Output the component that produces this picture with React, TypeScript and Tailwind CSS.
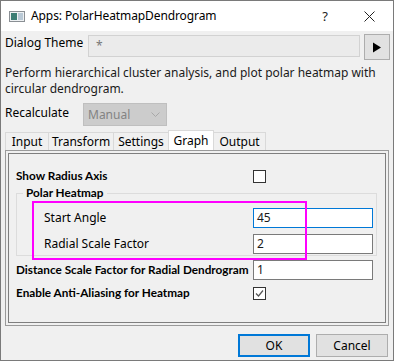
import React from 'react';

function AppIcon() {
  return (
    <svg width="16" height="11" viewBox="0 0 16 11">
      <rect x="0.5" y="0.5" width="15" height="10" fill="#eef1f3" stroke="#8a8f94" />
      <rect x="2" y="2" width="6" height="7" fill="#3c7d74" />
      <rect x="9" y="2" width="5" height="7" fill="#b9c9d6" />
    </svg>
  );
}

function CheckBox({ checked }: { checked?: boolean }) {
  return (
    <div className="w-[13px] h-[13px] border border-[#333333] bg-white flex items-center justify-center shrink-0">
      {checked && (
        <svg width="11" height="11" viewBox="0 0 11 11">
          <polyline points="2,5.5 4.5,8 9,2.5" fill="none" stroke="#555555" strokeWidth="1.2" />
        </svg>
      )}
    </div>
  );
}

function TextBox({ value, focused }: { value: string; focused?: boolean }) {
  return (
    <div
      className={`w-[120px] h-[20px] bg-white border flex items-center pl-[3px] text-[12px] font-normal font-['Noto_Sans',sans-serif] text-[#1a1a1a] ${
        focused ? 'border-[#0078d7]' : 'border-[#7a7a7a]'
      }`}
    >
      {value}
    </div>
  );
}

const tabs = [
  { name: 'Input', w: 'w-[44px]' },
  { name: 'Transform', w: 'w-[66px]' },
  { name: 'Settings', w: 'w-[56px]' },
  { name: 'Graph', w: 'w-[46px]', active: true },
  { name: 'Output', w: 'w-[53px]' },
];

// Lato Bold is about as narrow as Segoe UI Bold at 9pt
const boldLabel = "font-bold text-[11.75px] font-['Lato',sans-serif]";

export default function App() {
  return (
    <div className="relative w-[394px] h-[361px] bg-[#f0f0f0] border border-[#7a7a7a] flex flex-col text-[12px] leading-[16px] text-black font-['Noto_Sans','Liberation_Sans',sans-serif] overflow-hidden">
      {/* Title bar */}
      <div className="h-[30px] bg-white flex items-center shrink-0">
        <div className="ml-[8px]">
          <AppIcon />
        </div>
        <span className="ml-[6px] text-[12px] tracking-[-0.1px]">Apps: PolarHeatmapDendrogram</span>
        <span className="ml-auto text-[13px] text-[#222] mr-[36px]">?</span>
        <svg width="11" height="11" viewBox="0 0 11 11" className="mr-[18px]">
          <path d="M0.5 0.5 L10.5 10.5 M10.5 0.5 L0.5 10.5" stroke="#222" strokeWidth="1" />
        </svg>
      </div>

      {/* Dialog theme */}
      <div className="flex items-start mt-[3px] pl-[4px] h-[26px]">
        <span className="w-[83px] mt-[1px]">Dialog Theme</span>
        <div className="mt-[1px] w-[272px] h-[22px] border border-[#d2d2d2] bg-[#ebebeb] flex items-center pl-[7px] text-[#777]">
          *
        </div>
        <div className="ml-[4px] w-[26px] h-[26px] border border-[#adadad] bg-[#e1e1e1] flex items-center justify-center">
          <svg width="10" height="11" viewBox="0 0 10 11">
            <polygon points="1,0.5 9,5.5 1,10.5" fill="#000" />
          </svg>
        </div>
      </div>

      {/* Description */}
      <div className="mt-[5px] pl-[4px] text-[#1a1a1a]">
        Perform hierarchical cluster analysis, and plot polar heatmap with
        <br />
        circular dendrogram.
      </div>

      {/* Recalculate */}
      <div className="flex items-start mt-[6px] pl-[4px]">
        <span className="w-[78px] mt-[2px]">Recalculate</span>
        <div className="w-[84px] h-[23px] bg-[#cccccc] border border-[#bfbfbf] flex items-center pl-[4px] text-[#838383]">
          Manual
          <svg width="9" height="6" viewBox="0 0 9 6" className="ml-auto mr-[6px]">
            <polyline points="0.5,0.5 4.5,4.5 8.5,0.5" fill="none" stroke="#a8a8a8" strokeWidth="1" />
          </svg>
        </div>
      </div>

      {/* Tabs */}
      <div className="flex items-end mt-[4px] ml-[4px] h-[20px]">
        {tabs.map((t, i) => (
          <div
            key={t.name}
            className={`${t.w} ${i > 0 ? '-ml-px' : ''} border border-b-0 flex items-center justify-center ${
              t.active ? 'h-[20px] bg-white border-[#d9d9d9] z-10' : 'h-[18px] bg-[#f0f0f0] border-[#d9d9d9]'
            }`}
          >
            {t.name}
          </div>
        ))}
      </div>

      {/* Panel */}
      <div className="ml-[4px] w-[384px] h-[176px] border border-[#9a9a9a] p-[2px]">
        <div className="w-[378px] h-[170px] border border-[#7f7f7f] pl-[7px] flex flex-col">
          <div className="flex items-center h-[20px] mt-[12px]">
            <span className={`w-[237px] ${boldLabel}`}>Show Radius Axis</span>
            <CheckBox />
          </div>

          <div className="relative mt-[7px] w-[361px] border border-[#dcdcdc] pl-[27px] pb-[1px]">
            <span className={`absolute top-[-9px] left-[6px] px-[3px] bg-[#f0f0f0] ${boldLabel}`}>Polar Heatmap</span>
            <div className="flex items-center mt-[14px]">
              <span className="w-[209px]">Start Angle</span>
              <TextBox value="45" focused />
            </div>
            <div className="flex items-center mt-[6px]">
              <span className="w-[209px]">Radial Scale Factor</span>
              <TextBox value="2" />
            </div>
          </div>

          <div className="flex items-center mt-[4px]">
            <span className={`w-[237px] whitespace-nowrap ${boldLabel}`}>
              Distance Scale Factor for Radial Dendrogram
            </span>
            <TextBox value="1" />
          </div>

          <div className="flex items-center mt-[5px] h-[16px]">
            <span className={`w-[237px] ${boldLabel}`}>Enable Anti-Aliasing for Heatmap</span>
            <CheckBox checked />
          </div>
        </div>
      </div>

      {/* Buttons */}
      <div className="flex justify-end gap-[6px] mt-[8px] pr-[5px]">
        <div className="w-[72px] h-[23px] bg-[#e1e1e1] border-2 border-[#0078d7] flex items-center justify-center">OK</div>
        <div className="w-[72px] h-[23px] bg-[#e1e1e1] border border-[#adadad] flex items-center justify-center">Cancel</div>
      </div>

      {/* Annotation highlight */}
      <div className="absolute left-[31px] top-[200px] w-[275px] h-[59px] border-2 border-[#ff00ff] pointer-events-none" />
    </div>
  );
}
